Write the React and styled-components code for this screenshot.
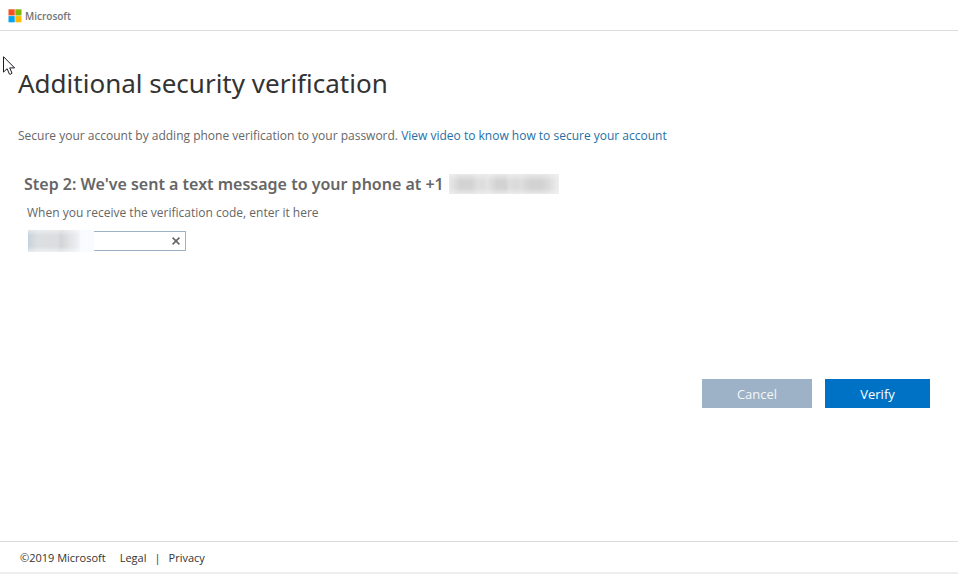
import React, { useState } from "react";
import styled, { createGlobalStyle } from "styled-components";

const GlobalStyle = createGlobalStyle`
  * { box-sizing: border-box; }
  body {
    margin: 0;
    background: #fff;
    color: #666;
    font-family: "Open Sans", "Noto Sans", sans-serif;
    font-size: 12px;
    line-height: 16px;
  }
`;

const Page = styled.div`
  display: flex;
  flex-direction: column;
  min-height: 100vh;
`;

const Header = styled.header`
  display: flex;
  align-items: center;
  gap: 3px;
  height: 31px;
  padding: 2px 8px 0;
  border-bottom: 1px solid #dcdcdc;
`;

const Brand = styled.span`
  color: #737373;
  font-size: 10px;
  font-weight: 600;
`;

const Main = styled.main`
  flex: 1;
  padding: 32px 28px 0 18px;
`;

const Title = styled.h1`
  margin: 0;
  color: #333;
  font-family: "Noto Sans", "Open Sans", sans-serif;
  font-size: 26px;
  font-weight: 400;
  line-height: 40px;
`;

const Intro = styled.p`
  margin: 25px 0 0;
`;

const Link = styled.a`
  color: #1f6fa5;
  text-decoration: none;
`;

const Step = styled.form`
  margin-top: 30px;
`;

const StepTitle = styled.h2`
  display: flex;
  align-items: center;
  gap: 5px;
  margin: 0 0 0 6px;
  font-family: "Noto Sans", "Open Sans", sans-serif;
  font-size: 16px;
  font-weight: 600;
  line-height: 20px;
`;

const HiddenNumber = styled.span`
  width: 110px;
  height: 20px;
  background:
    linear-gradient(to bottom, rgba(240, 240, 240, 0.75), transparent 35%, transparent 70%, rgba(240, 240, 240, 0.75)),
    linear-gradient(to right, #e8e8e8, #d3d3d3 10%, #d3d3d3 20%, #e0e0e0 27%, #dcdcdc 30%, #e3e3e3 35%, #d2d2d2 44%, #d2d2d2 51%, #dedede 55%, #dadada 62%, #dedede 65%, #d2d2d2 74%, #d2d2d2 84%, #dadada 90%, #efefef);
`;

const CodeLabel = styled.label`
  display: block;
  margin: 11px 0 0 9px;
`;

const CodeBox = styled.div`
  display: flex;
  align-items: center;
  width: 158px;
  height: 20px;
  margin: 10px 0 0 10px;
  border: 1px solid #9bb2c6;
`;

const HiddenCode = styled.span`
  flex: none;
  width: 66px;
  height: 22px;
  margin-left: -1px;
  background:
    linear-gradient(to bottom, rgba(250, 251, 253, 0.5), transparent 25%, transparent 75%, rgba(250, 251, 253, 0.6)),
    linear-gradient(to right, #c5d2de, #dcdfe2 14%, #dcdddf 45%, #d3d4d6 50%, #e2e3e5 63%, #eeeff2 76%, #f9fbfe 80%, #f9fbfe);
`;

const CodeInput = styled.input`
  flex: 1;
  min-width: 0;
  height: 18px;
  padding: 0 2px;
  border: 0;
  outline: 0;
  background: transparent;
  color: #666;
  font: inherit;
`;

const ClearButton = styled.button`
  display: flex;
  align-items: center;
  justify-content: center;
  width: 18px;
  height: 18px;
  padding: 0;
  border: 0;
  background: transparent;
  color: #666;
`;

const Actions = styled.div`
  display: flex;
  justify-content: flex-end;
  gap: 13px;
  margin-top: 128px;
`;

const ActionButton = styled.button`
  width: ${({ $primary }) => ($primary ? "105px" : "110px")};
  height: 29px;
  padding: 0;
  border: 0;
  background: ${({ $primary }) => ($primary ? "#0072c6" : "#9db2c6")};
  color: ${({ $primary }) => ($primary ? "#fff" : "#f3f6f9")};
  font-family: inherit;
  font-size: 13px;
  line-height: 20px;
`;

const Footer = styled.footer`
  display: flex;
  align-items: center;
  height: 33px;
  padding: 2px 20px 0;
  border-top: 1px solid #dcdcdc;
  border-bottom: 2px solid #eee;
  color: #333;
  font-size: 11px;
`;

const FooterLinks = styled.nav`
  display: flex;
  gap: 8px;
  margin-left: 14px;
`;

const FooterLink = styled.a`
  color: inherit;
  text-decoration: none;
`;

const Pointer = styled.svg`
  position: absolute;
  top: 56px;
  left: 3px;
  pointer-events: none;
`;

function MicrosoftMark() {
  return (
    <svg width="14" height="14" viewBox="0 0 14 14" aria-hidden="true">
      <path fill="#f25022" d="M.5.3h6.2v6.2H.5z" />
      <path fill="#7fba00" d="M7.3.3h6.2v6.2H7.3z" />
      <path fill="#00a4ef" d="M.5 7.1h6.2v6.2H.5z" />
      <path fill="#ffb900" d="M7.3 7.1h6.2v6.2H7.3z" />
    </svg>
  );
}

export default function App() {
  const [code, setCode] = useState("");

  return (
    <Page>
      <GlobalStyle />
      <Header>
        <MicrosoftMark />
        <Brand>Microsoft</Brand>
      </Header>

      <Main>
        <Title>Additional security verification</Title>
        <Intro>
          Secure your account by adding phone verification to your password.{" "}
          <Link href="#video">View video to know how to secure your account</Link>
        </Intro>

        <Step onSubmit={(event) => event.preventDefault()}>
          <StepTitle>
            Step 2: We've sent a text message to your phone at +1
            <HiddenNumber />
          </StepTitle>
          <CodeLabel htmlFor="code">When you receive the verification code, enter it here</CodeLabel>
          <CodeBox>
            <HiddenCode />
            <CodeInput id="code" value={code} onChange={(event) => setCode(event.target.value)} />
            <ClearButton type="button" aria-label="Clear" onClick={() => setCode("")}>
              <svg width="8" height="8" viewBox="0 0 8 8" fill="none" stroke="currentColor" strokeWidth="1.6">
                <path d="M.6.6l6.8 6.8M7.4.6L.6 7.4" />
              </svg>
            </ClearButton>
          </CodeBox>
          <Actions>
            <ActionButton type="button">Cancel</ActionButton>
            <ActionButton type="submit" $primary>Verify</ActionButton>
          </Actions>
        </Step>
      </Main>

      <Footer>
        <span>©2019 Microsoft</span>
        <FooterLinks>
          <FooterLink href="#legal">Legal</FooterLink>
          <span>|</span>
          <FooterLink href="#privacy">Privacy</FooterLink>
        </FooterLinks>
      </Footer>

      <Pointer width="13" height="20" viewBox="0 0 13 20" aria-hidden="true">
        <path
          d="M.5.7v15.4l3.6-3.4 2.3 5.4q1.6.6 2.6-1l-2.3-5.2h4.9z"
          fill="#fff"
          stroke="#1c1c28"
          strokeWidth="1"
        />
      </Pointer>
    </Page>
  );
}
